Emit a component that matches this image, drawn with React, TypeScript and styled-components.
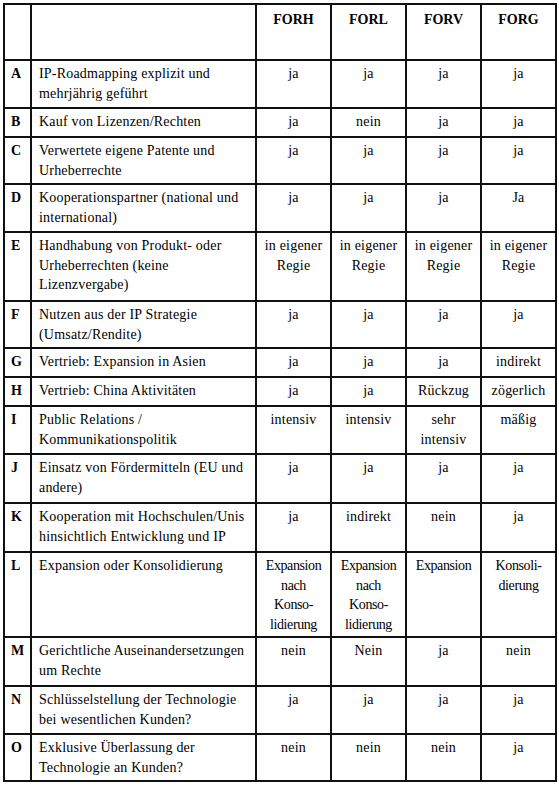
import { createGlobalStyle } from 'styled-components';
import styled from 'styled-components';

const GlobalStyle = createGlobalStyle`
  html, body {
    margin: 0;
    padding: 0;
    background: #ffffff;
  }
  body {
    font-family: "Liberation Serif", "Times New Roman", serif;
    color: #000;
  }
`;

const TableWrapper = styled.div`
  padding: 3px 0 0 3px;
`;

const StyledTable = styled.table`
  table-layout: fixed;
  border-collapse: separate;
  border-spacing: 0;
  width: 554px;
  border-top: 2px solid #111;
  border-left: 2px solid #111;
  font-family: "Liberation Serif", "Times New Roman", serif;
  font-size: 14px;
  line-height: 19.5px;
  color: #000;
`;

const Col = styled.col<{ $w: number }>`
  width: ${(p) => p.$w}px;
`;

const StyledTr = styled.tr<{ $h: number }>`
  height: ${(p) => p.$h}px;
`;

const BaseCell = styled.td`
  box-sizing: border-box;
  border-right: 2px solid #111;
  border-bottom: 2px solid #111;
  vertical-align: top;
  padding: 3px 0 0 0;
  white-space: nowrap;
  font-family: inherit;
  font-size: inherit;
  line-height: inherit;
`;

const HeadCell = styled(BaseCell).attrs({ as: 'th' })`
  padding-top: 5px;
  font-weight: bold;
  text-align: center;
`;

const KeyCell = styled(BaseCell)`
  padding-left: 6px;
  font-weight: bold;
`;

const TopicCell = styled(BaseCell)`
  padding-left: 7px;
  letter-spacing: 0.2px;
`;

const ValueCell = styled(BaseCell)<{ $tight?: boolean }>`
  text-align: center;
  letter-spacing: ${(p) => (p.$tight ? '-0.4px' : '0.2px')};
`;

type Row = {
  key: string;
  h: number;
  topic: string[];
  values: string[][];
};

const rows: Row[] = [
  { key: 'A', h: 48, topic: ['IP-Roadmapping explizit und', 'mehrjährig geführt'], values: [['ja'], ['ja'], ['ja'], ['ja']] },
  { key: 'B', h: 29, topic: ['Kauf von Lizenzen/Rechten'], values: [['ja'], ['nein'], ['ja'], ['ja']] },
  { key: 'C', h: 47, topic: ['Verwertete eigene Patente und', 'Urheberrechte'], values: [['ja'], ['ja'], ['ja'], ['ja']] },
  { key: 'D', h: 48, topic: ['Kooperationspartner (national und', 'international)'], values: [['ja'], ['ja'], ['ja'], ['Ja']] },
  {
    key: 'E',
    h: 69,
    topic: ['Handhabung von Produkt- oder', 'Urheberrechten (keine', 'Lizenzvergabe)'],
    values: [
      ['in eigener', 'Regie'],
      ['in eigener', 'Regie'],
      ['in eigener', 'Regie'],
      ['in eigener', 'Regie'],
    ],
  },
  { key: 'F', h: 47, topic: ['Nutzen aus der IP Strategie', '(Umsatz/Rendite)'], values: [['ja'], ['ja'], ['ja'], ['ja']] },
  { key: 'G', h: 29, topic: ['Vertrieb: Expansion in Asien'], values: [['ja'], ['ja'], ['ja'], ['indirekt']] },
  { key: 'H', h: 29, topic: ['Vertrieb: China Aktivitäten'], values: [['ja'], ['ja'], ['Rückzug'], ['zögerlich']] },
  {
    key: 'I',
    h: 48,
    topic: ['Public Relations /', 'Kommunikationspolitik'],
    values: [['intensiv'], ['intensiv'], ['sehr', 'intensiv'], ['mäßig']],
  },
  { key: 'J', h: 49, topic: ['Einsatz von Fördermitteln (EU und', 'andere)'], values: [['ja'], ['ja'], ['ja'], ['ja']] },
  {
    key: 'K',
    h: 49,
    topic: ['Kooperation mit Hochschulen/Unis', 'hinsichtlich Entwicklung und IP'],
    values: [['ja'], ['indirekt'], ['nein'], ['ja']],
  },
  {
    key: 'L',
    h: 85,
    topic: ['Expansion oder Konsolidierung'],
    values: [
      ['Expansion', 'nach', 'Konso-', 'lidierung'],
      ['Expansion', 'nach', 'Konso-', 'lidierung'],
      ['Expansion'],
      ['Konsoli-', 'dierung'],
    ],
  },
  { key: 'M', h: 49, topic: ['Gerichtliche Auseinandersetzungen', 'um Rechte'], values: [['nein'], ['Nein'], ['ja'], ['nein']] },
  { key: 'N', h: 48, topic: ['Schlüsselstellung der Technologie', 'bei wesentlichen Kunden?'], values: [['ja'], ['ja'], ['ja'], ['ja']] },
  { key: 'O', h: 47, topic: ['Exklusive Überlassung der', 'Technologie an Kunden?'], values: [['nein'], ['nein'], ['nein'], ['ja']] },
];

const companies = ['FORH', 'FORL', 'FORV', 'FORG'];
const columnWidths = [27, 225, 75, 75, 75, 75];

function Lines(props: { lines: string[] }) {
  return (
    <>
      {props.lines.map((line, i) => (
        <span key={i}>
          {i > 0 && <br />}
          {line}
        </span>
      ))}
    </>
  );
}

function App() {
  return (
    <>
      <GlobalStyle />
      <TableWrapper>
        <StyledTable>
          <colgroup>
            {columnWidths.map((w, i) => (
              <Col key={i} $w={w} />
            ))}
          </colgroup>
          <thead>
            <StyledTr $h={56}>
              <HeadCell></HeadCell>
              <HeadCell></HeadCell>
              {companies.map((c) => (
                <HeadCell key={c}>{c}</HeadCell>
              ))}
            </StyledTr>
          </thead>
          <tbody>
            {rows.map((row) => (
              <StyledTr key={row.key} $h={row.h}>
                <KeyCell>{row.key}</KeyCell>
                <TopicCell>
                  <Lines lines={row.topic} />
                </TopicCell>
                {row.values.map((v, i) => (
                  <ValueCell key={i} $tight={row.key === 'L'}>
                    <Lines lines={v} />
                  </ValueCell>
                ))}
              </StyledTr>
            ))}
          </tbody>
        </StyledTable>
      </TableWrapper>
    </>
  );
}

export default App;
